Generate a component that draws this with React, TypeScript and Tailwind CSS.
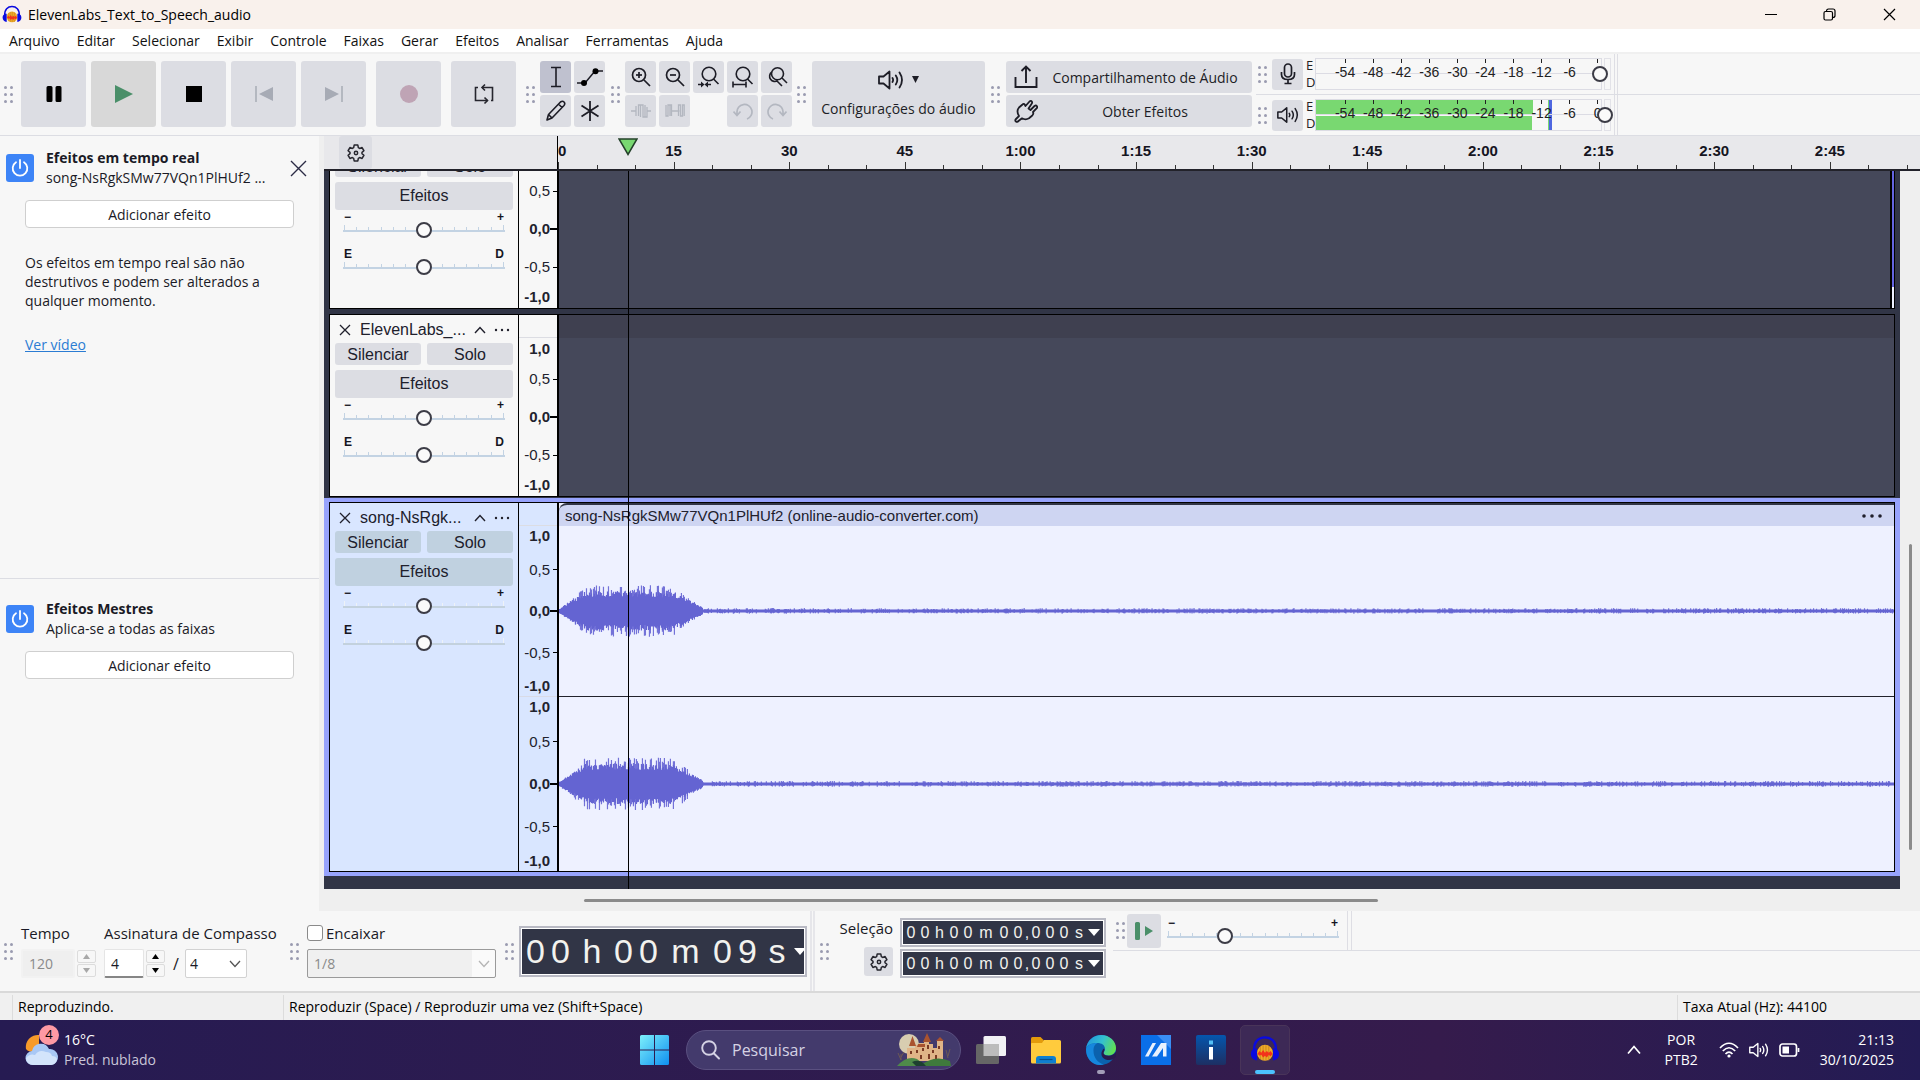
import type { ReactNode } from "react";

const BTN = "flex items-center justify-center rounded-[3px] bg-[#dcdde3]";
const UI = "font-['Open_Sans','Noto_Sans',sans-serif]";
const ARIAL = "font-['Liberation_Sans',Arial,sans-serif]";

/* ---------- small shared pieces ---------- */

function Grip({ className = "" }: { className?: string }) {
  return (
    <span className={`grid w-[9px] shrink-0 grid-cols-2 gap-x-[3px] gap-y-1 self-center ${className}`} aria-hidden="true">
      {[0, 1, 2, 3, 4, 5].map((i) => (
        <i key={i} className="size-[3px] rounded-full bg-[#9a9bb0]" />
      ))}
    </span>
  );
}

function Svg({ w, h, vb, children, sw = 2, className = "" }: { w: number; h: number; vb?: string; children: ReactNode; sw?: number; className?: string }) {
  return (
    <svg width={w} height={h} viewBox={vb ?? `0 0 ${w} ${h}`} fill="none" stroke="currentColor" strokeWidth={sw} className={`shrink-0 ${className}`} aria-hidden="true">
      {children}
    </svg>
  );
}

function Gear() {
  return (
    <Svg w={20} h={20} vb="0 0 24 24" sw={1.8}>
      <circle cx="12" cy="12" r="2" />
      <path strokeLinejoin="round" d="M9.8 2.5h4.4l.6 3 1.6 1 2.9-1 2.2 3.8-2.3 1.9v1.6l2.3 1.9-2.2 3.8-2.9-1-1.6 1-.6 3H9.8l-.6-3-1.6-1-2.9 1-2.2-3.8 2.3-1.9v-1.6L2.5 9.3l2.2-3.8 2.9 1 1.6-1z" />
    </Svg>
  );
}

function Speaker({ w = 26 }: { w?: number }) {
  return (
    <Svg w={w} h={20} vb="0 0 26 20" sw={1.8}>
      <path strokeLinejoin="round" d="M1 6.5h4.5l6-5v17l-6-5H1z" />
      <path strokeLinecap="round" d="M14.5 8q1.2 2 0 4M17.8 5.5q3 4.500 0 9M21.500 2.500q5 7.500 0 15" />
    </Svg>
  );
}

function HeadphoneLogo({ size }: { size: number }) {
  return (
    <svg width={size} height={size} viewBox="0 0 32 32" aria-hidden="true" className="shrink-0">
      <circle cx="16" cy="19" r="8.500" fill="#f0ab28" />
      <path d="M11 13v13M14 11v16M17 11v16M20 12v15" stroke="#c98a20" strokeWidth="1" />
      <path d="M8 20l2-3 2 2 2-3 2 3 2-2 2 2 2-2 2 3-2 3-2-2-2 3-2-2-2 2-2-3-2 1z" fill="#f3321b" />
      <path d="M4.500 17C3.500 7 9.500 2.500 16 2.500S28.500 7 27.500 17" fill="none" stroke="#0a0ae0" strokeWidth="2.400" />
      <path d="M7.500 14c-5 0-6.500 3-6.500 6.500S3.500 27 7.500 27zM24.500 14c5 0 6.500 3 6.500 6.500S28.500 27 24.500 27z" fill="#0a0ae0" />
    </svg>
  );
}

type RangeProps = { label: string; left: string; right: string; value: number; steps: number; tone: string; tickTone: string };

function TickSlider({ label, left, right, value, steps, tone, tickTone }: RangeProps) {
  return (
    <div className={`${ARIAL} text-[12px] leading-3 text-[#15151f]`}>
      <div className="flex justify-between px-px font-bold">
        <span>{left}</span>
        <span>{right}</span>
      </div>
      <div className="relative -mt-px h-4">
        <div className="absolute inset-x-0 top-[3px] flex items-end justify-between px-px">
          {Array.from({ length: steps + 1 }, (_, i) => (
            <i key={i} className={`w-px ${tickTone} ${i === 0 || i === steps ? "h-[5px]" : "h-[3px]"}`} />
          ))}
        </div>
        <div className={`absolute inset-x-0 top-2 h-[2px] ${tone}`} />
        <input
          type="range"
          aria-label={label}
          defaultValue={value}
          className="absolute inset-0 h-4 w-full appearance-none bg-transparent [&::-webkit-slider-thumb]:size-4 [&::-webkit-slider-thumb]:appearance-none [&::-webkit-slider-thumb]:rounded-full [&::-webkit-slider-thumb]:border-2 [&::-webkit-slider-thumb]:border-[#3c3c46] [&::-webkit-slider-thumb]:bg-[#fafafa]"
        />
      </div>
    </div>
  );
}

/* ---------- title bar and menu ---------- */

function TitleBar() {
  return (
    <header className={`flex h-[29px] shrink-0 items-center bg-[#f9f1ec] pl-0.5 text-[14px] text-black ${UI}`}>
      <HeadphoneLogo size={20} />
      <h1 className="ml-1.5 flex-1">ElevenLabs_Text_to_Speech_audio</h1>
      <div className="flex items-center">
        <button aria-label="Minimizar" className="flex w-[58px] justify-center">
          <Svg w={12} h={12} sw={1}><path d="M0 5.500h12" /></Svg>
        </button>
        <button aria-label="Restaurar" className="flex w-[58px] justify-center">
          <Svg w={13} h={13} sw={1.2}>
            <rect x="1" y="3.500" width="8.500" height="8.500" rx="1.500" />
            <path d="M3.500 3.200Q3.500 1 5.500 1H10q2 0 2 2v4.500q0 2-2.200 2" />
          </Svg>
        </button>
        <button aria-label="Fechar" className="flex w-[62px] justify-center">
          <Svg w={13} h={13} sw={1.2}><path d="M1 1l11 11M12 1L1 12" /></Svg>
        </button>
      </div>
    </header>
  );
}

const MENUS = ["Arquivo", "Editar", "Selecionar", "Exibir", "Controle", "Faixas", "Gerar", "Efeitos", "Analisar", "Ferramentas", "Ajuda"];

function MenuBar() {
  return (
    <nav className={`flex h-[25px] shrink-0 items-center gap-[17px] border-b-2 border-[#f0f0f0] bg-white pl-[9px] text-[14px] text-[#111] ${UI}`}>
      {MENUS.map((m) => (
        <button key={m}>{m}</button>
      ))}
    </nav>
  );
}

/* ---------- top toolbars ---------- */

function Transport() {
  const big = `${BTN} h-[66px] w-[65px]`;
  return (
    <>
      <div className="ml-2 flex gap-[5px]">
        <button aria-label="Pausar" className={`${big} text-black`}>
          <Svg w={16} h={16} sw={0}><path fill="currentColor" d="M2 0h3q1.500 0 1.500 1.500v13Q6.500 16 5 16H2Q.5 16 .5 14.500v-13Q.5 0 2 0zM11 0h3q1.500 0 1.500 1.500v13q0 1.500-1.500 1.500h-3q-1.500 0-1.500-1.500v-13Q9.500 0 11 0z" /></Svg>
        </button>
        <button aria-label="Reproduzir" className="flex h-[66px] w-[65px] items-center justify-center rounded-[3px] bg-[#d8d8d8] text-[#4a8f69]">
          <Svg w={18} h={18} sw={0}><path fill="currentColor" d="M0 0l18 9-18 9z" /></Svg>
        </button>
        <button aria-label="Parar" className={`${big} text-black`}>
          <Svg w={16} h={16} sw={0}><path fill="currentColor" d="M0 0h16v16H0z" /></Svg>
        </button>
        <button aria-label="Ir para o início" className={`${big} text-[#a7abb5]`}>
          <Svg w={18} h={16} sw={1.500}><path d="M1 0v16" /><path stroke="none" fill="currentColor" d="M18 1v14L4 8z" /></Svg>
        </button>
        <button aria-label="Ir para o fim" className={`${big} text-[#a7abb5]`}>
          <Svg w={18} h={16} sw={1.500}><path d="M17 0v16" /><path stroke="none" fill="currentColor" d="M0 1v14l14-7z" /></Svg>
        </button>
      </div>
      <button aria-label="Gravar" className={`${big} ml-2.5`}>
        <i className="size-[18px] rounded-full bg-[#bfa4b5]" />
      </button>
      <button aria-label="Repetir" className={`${big} ml-2.5 text-[#26262e]`}>
        <Svg w={20} h={22} sw={1.600}>
          <path d="M5 17.500H1.500V4.500H4M8 4.500h10.500v13H17M1.500 17.500h12" />
          <path d="M11 1.500l-3 3 3 3M10.500 14.500l3 3-3 3" />
        </Svg>
      </button>
    </>
  );
}

const magnifier = (minus: boolean, plus: boolean) => (
  <Svg w={20} h={20} sw={1.700}>
    <circle cx="8" cy="8" r="6.500" />
    <path d="M13 13l6 6" />
    {(minus || plus) && <path d="M5 8h6" />}
    {plus && <path d="M8 5v6" />}
  </Svg>
);

function ToolGrid() {
  const sm = `${BTN} h-8 w-[31px] text-[#1d1d26]`;
  const off = `${BTN} h-8 w-[31px] text-[#b3b7c0]`;
  return (
    <>
      <div className="ml-[5px] grid grid-cols-[31px_31px] gap-x-[3px] gap-y-0.5">
        <button aria-label="Seleção" className="flex h-8 w-[31px] items-center justify-center rounded-[3px] bg-[#bfc1cf] text-[#1d1d26]">
          <Svg w={12} h={22} sw={1.600}><path d="M1 1.500h10M6 1.500v19M1 20.500h10" /></Svg>
        </button>
        <button aria-label="Envelope" className={sm}>
          <Svg w={26} h={18} sw={1.500}>
            <path d="M0 15h8L18 3h8" />
            <circle cx="7" cy="15" r="3" fill="#000" stroke="none" />
            <circle cx="18.500" cy="3.200" r="3" fill="#000" stroke="none" />
          </Svg>
        </button>
        <button aria-label="Desenho" className={sm}>
          <Svg w={22} h={22} sw={1.600}>
            <path strokeLinejoin="round" d="M2 20l1.500-5.500L15.500 2q2-1.500 3.500 0t0 3.500L7 18zM3.500 14.500L7 18M13.500 4l3.500 3.500" />
          </Svg>
        </button>
        <button aria-label="Multiferramenta" className={sm}>
          <Svg w={20} h={20} sw={1.800}><path d="M10 0v20M1.500 4.500l17 11M18.500 4.500l-17 11" /></Svg>
        </button>
      </div>
      <Grip className="ml-1.5" />
      <div className="ml-[5px] grid grid-cols-[31px_31px_31px_31px_31px] gap-x-[3px] gap-y-0.5">
        <button aria-label="Ampliar" className={sm}>{magnifier(true, true)}</button>
        <button aria-label="Reduzir" className={sm}>{magnifier(true, false)}</button>
        <button aria-label="Ajustar seleção à largura" className={sm}>
          <Svg w={22} h={22} sw={1.600}>
            <circle cx="11" cy="8" r="6.800" />
            <path d="M15.500 13l5 5M0 18.500h5M8 18.500h5" />
            <path stroke="none" fill="currentColor" d="M3 15.500l3.500 3-3.500 3zM10 15.500l-3.500 3 3.500 3z" />
          </Svg>
        </button>
        <button aria-label="Ajustar projeto à largura" className={sm}>
          <Svg w={22} h={22} sw={1.600}>
            <circle cx="11" cy="8" r="6.800" />
            <path d="M15.500 13l5 5M1 18.500h13M1 15.500v6M14 15.500v6" />
          </Svg>
        </button>
        <button aria-label="Alternar zoom" className={sm}>
          <Svg w={22} h={20} sw={1.600}>
            <circle cx="11.500" cy="6.800" r="6" />
            <path d="M5.800 5a5 5 0 1 0 6 8.500M16 11l5 5M11 14l5 5" />
          </Svg>
        </button>
        <button aria-label="Aparar áudio" className={off}>
          <Svg w={20} h={16} sw={1.300}><path d="M0 8h5M5 3v10M7.500 13V2h2v12M9.500 14V2h2.500v12h2V2M14 14h2V4M16 8h4" /></Svg>
        </button>
        <button aria-label="Silenciar áudio" className={off}>
          <Svg w={20} h={16} sw={1.300}><path d="M1 2v11h2V2h2v11M5 2h1.500v11M6.500 8h8M13.500 13V2h2v11h2V2h1.700v11" /></Svg>
        </button>
        <span />
        <button aria-label="Desfazer" className={off}>
          <Svg w={20} h={20} sw={1.700}><path d="M14 18a7.500 7.500 0 1 0-10-6.500V14M.5 10.500l3.500 4 3.500-4" /></Svg>
        </button>
        <button aria-label="Refazer" className={off}>
          <Svg w={20} h={20} sw={1.700}><path d="M6 18a7.500 7.500 0 1 1 10-6.500V14M12.500 10.500l3.500 4 3.500-4" /></Svg>
        </button>
      </div>
    </>
  );
}

const DB = [-54, -48, -42, -36, -30, -24, -18, -12, -6, 0];

function Meter({ name, active, children }: { name: string; active: boolean; children: ReactNode }) {
  return (
    <div className="flex h-10 items-center pl-0.5">
      <Grip />
      <button aria-label={name} className={`${BTN} ml-[5px] h-[31px] w-[31px] text-[#1d1d26]`}>{children}</button>
      <div className={`ml-[3px] flex w-[9px] flex-col text-[13px] leading-[17px] text-[#222] ${UI}`}>
        <span>E</span>
        <span>D</span>
      </div>
      <div className="relative h-8 w-[287px] border border-[#dcdce4] bg-[#f7f7f7]" role="meter" aria-label={`Nível de ${name}`}>
        {active && (
          <>
            <div className="h-[14px] w-[217px] bg-[#79d871]" />
            <div className="mt-0.5 h-[14px] w-[216px] bg-[#79d871]" />
            <div className="absolute inset-y-0 left-[232px] w-1 border-l border-[#79d871] bg-[#4f67e0]" />
          </>
        )}
        <div className="absolute inset-x-0 top-[14px] h-px bg-[#dcdce4]" />
        {DB.map((d, i) => (
          <div key={d} className={`absolute top-0 flex w-8 -translate-x-1/2 flex-col items-center text-[14px] leading-[19px] text-[#222] ${ARIAL}`} style={{ left: `${10.2 + i * 9.85}%` }}>
            <i className="h-1 w-px bg-[#222]" />
            {(d !== 0 || active) && <span>{d}</span>}
          </div>
        ))}
        <div className={`absolute top-[7px] size-4 rounded-full border-2 border-[#3c3c46] bg-[#fafafa] ${active ? "left-[281px]" : "left-[276px]"}`} />
      </div>
      <div className="ml-0.5 h-8 w-[7px] border border-[#e2e2e8]" />
      <div className="ml-[3px] h-10 w-1 border-x border-[#dedee4]" />
    </div>
  );
}

function TopToolbars() {
  return (
    <div className={`flex h-[82px] shrink-0 items-center border-b border-[#dcdde3] bg-[#f7f7f7] pb-px pl-1 ${UI}`}>
      <Grip />
      <Transport />
      <Grip className="ml-2.5" />
      <ToolGrid />
      <Grip className="ml-[5px]" />
      <button className={`${BTN} ml-1.5 h-[66px] w-[173px] flex-col gap-2 text-[14px] text-[#1d1d26]`}>
        <span className="flex items-center gap-2">
          <Speaker />
          <Svg w={7} h={7} sw={0}><path fill="currentColor" d="M0 0h7L3.500 7z" /></Svg>
        </span>
        Configurações do áudio
      </button>
      <Grip className="ml-1.5" />
      <div className="ml-1.5 flex w-[246px] flex-col gap-0.5 text-[14px] text-[#1d1d26]">
        <button className="flex h-8 items-center rounded-[3px] bg-[#dcdde3] pl-2">
          <Svg w={24} h={24} sw={1.900}>
            <path d="M1.500 12v10h21V12M12 18V2M7.500 6L12 1.500 16.500 6" />
          </Svg>
          <span className="flex-1 text-center">Compartilhamento de Áudio</span>
        </button>
        <button className="flex h-8 items-center rounded-[3px] bg-[#dcdde3] pl-2">
          <Svg w={24} h={24} sw={1.800}>
            <path strokeLinejoin="round" d="M2 22.500q-1.500-1 0-2.500l3-3q-3-5 0-8.500l3.500-3q1.500-1.500 2.500.5l.5 1 4-4.500q1.500-1.200 2.300 0t-.3 2.500L14.500 9.500l2 1.500L20.500 7q1.500-1 2.300 0t0 2.200L19 13q1 2-1 3.800l-3 2.500q-3.500 2-7 0L4.500 22q-1.500 1.500-2.500.5z" />
          </Svg>
          <span className="flex-1 text-center">Obter Efeitos</span>
        </button>
      </div>
      <div className="ml-1 flex-1 self-stretch">
        <Meter name="Gravação" active={false}>
          <Svg w={16} h={22} sw={1.700}>
            <rect x="4.500" y="1" width="7" height="13" rx="3.500" />
            <path d="M1.500 9v2.500q0 5 6.500 5t6.500-5V9M8 16.500V20M4.500 20.500h7" />
          </Svg>
        </Meter>
        <div className="h-px bg-[#dcdde3]" />
        <Meter name="Reprodução" active>
          <Speaker w={22} />
        </Meter>
      </div>
    </div>
  );
}

/* ---------- effects panel ---------- */

function Power() {
  return (
    <button aria-label="Ativar efeitos" className="flex size-7 shrink-0 items-center justify-center rounded-[3px] bg-[#3d84f7] text-white">
      <Svg w={18} h={18} sw={1.800}>
        <path strokeLinecap="round" d="M5 3.200a7.300 7.300 0 1 0 8 0M9 1v8" />
      </Svg>
    </button>
  );
}

function AddEffect() {
  return <button className="ml-[25px] flex h-7 w-[269px] items-center justify-center rounded-[4px] border border-[#cfcfcf] bg-white">Adicionar efeito</button>;
}

function EffectsPanel() {
  return (
    <aside className={`flex w-[319px] shrink-0 flex-col bg-[#f7f7f7] text-[14px] leading-[19px] text-[#1a1a26] ${UI}`}>
      <section className="h-[442px] pt-3">
        <div className="mb-3 flex items-center pr-3 pl-1.5">
          <Power />
          <div className="ml-3 w-[240px] leading-5">
            <h2 className="font-bold">Efeitos em tempo real</h2>
            <p>song-NsRgkSMw77VQn1PlHUf2 ...</p>
          </div>
          <button aria-label="Fechar painel" className="ml-1 text-[#2b2b45]">
            <Svg w={17} h={17} sw={1.400}><path d="M1 1l15 15M16 1L1 16" /></Svg>
          </button>
        </div>
        <AddEffect />
        <p className="mt-[25px] w-[260px] pl-[25px]">
          Os efeitos em tempo real são não destrutivos e podem ser alterados a qualquer momento.
        </p>
        <a href="#video" className="mt-[25px] ml-[25px] inline-block text-[#2b7cd3] underline">Ver vídeo</a>
      </section>
      <section className="flex-1 border-t border-[#dcdde3] pt-5">
        <div className="mb-3 flex items-center pl-1.5">
          <Power />
          <div className="ml-3 leading-5">
            <h2 className="font-bold">Efeitos Mestres</h2>
            <p>Aplica-se a todas as faixas</p>
          </div>
        </div>
        <AddEffect />
      </section>
    </aside>
  );
}

/* ---------- timeline and tracks ---------- */

const SPAN = 176.700;
const MARKS = ["0", "15", "30", "45", "1:00", "1:15", "1:30", "1:45", "2:00", "2:15", "2:30", "2:45"];

function Timeline() {
  return (
    <div className="flex h-[35px] shrink-0 border-b-2 border-[#22222a] bg-[#e8e8eb]">
      <div className="w-[233px] shrink-0 pl-[15px]">
        <button aria-label="Opções da linha do tempo" className={`${BTN} h-[33px] w-[33px] text-[#26262e]`}>
          <Gear />
        </button>
      </div>
      <div className={`relative flex-1 border-l border-black text-[15px] leading-5 font-bold text-[#15151f] ${ARIAL}`}>
        {Array.from({ length: 36 }, (_, i) => (
          <i key={i} className={`absolute bottom-0 w-px bg-[#333] ${i % 3 === 0 ? "h-[7px]" : "h-1"}`} style={{ left: `${((i * 5) / SPAN) * 100}%` }} />
        ))}
        {MARKS.map((m, i) => (
          <span key={m} className={`absolute top-[5px] ${i === 0 ? "" : "-translate-x-1/2"}`} style={{ left: `${((i * 15) / SPAN) * 100}%` }}>
            {m}
          </span>
        ))}
        <svg width="20" height="18" viewBox="0 0 20 18" className="absolute top-[2px] left-[60px]" aria-hidden="true">
          <path d="M1 1h18L10 16.500z" fill="#79d871" stroke="#24402a" strokeWidth="1.500" />
        </svg>
      </div>
    </div>
  );
}

function wavePath(seed: number, width: number, idle: number) {
  let s = seed;
  const rnd = () => {
    s = (s * 16807) % 2147483647;
    return s / 2147483647;
  };
  let core = "";
  let peaks = "";
  for (let x = 0; x < width; x += 1) {
    let env = 0;
    if (x < 144) env = Math.min(1, (x + 2) / 28) * Math.min(1, (148 - x) / 34);
    const up = env > 0 ? env * (13 + rnd() * 6) + 1 : idle;
    const down = env > 0 ? env * (13 + rnd() * 6) + 1 : idle;
    core += `M${x + 0.5} ${(-up).toFixed(1)}V${down.toFixed(1)}`;
    if (env > 0 && rnd() > 0.5) peaks += `M${x + 0.5} ${(-env * (17 + rnd() * 9)).toFixed(1)}V${(env * (17 + rnd() * 9)).toFixed(1)}`;
    if (env === 0 && rnd() > 0.6) peaks += `M${x + 0.5} ${(-idle - rnd() * 1.500).toFixed(1)}V${(idle + rnd() * 1.200).toFixed(1)}`;
  }
  return { core, peaks };
}

const WAVES = [wavePath(7321, 1336, 1.500), wavePath(90217, 1336, 1.500)];

function Wave({ index }: { index: number }) {
  return (
    <svg viewBox="0 -86 1336 172" preserveAspectRatio="none" className="h-full w-full" aria-hidden="true">
      <path d={WAVES[index].peaks} stroke="#7372d8" strokeWidth="1.200" />
      <path d={WAVES[index].core} stroke="#6464d2" strokeWidth="1.200" />
    </svg>
  );
}

const SCALE_LABELS = ["1,0", "0,5", "0,0", "-0,5", "-1,0"];
const SCALE_ALIGN = ["items-start", "items-center", "items-center", "items-center", "items-end"];

function Scale({ size }: { size: string }) {
  return (
    <div className={`grid grid-rows-[1fr_2fr_2fr_2fr_1fr] ${size} text-[15px] leading-4 text-[#22222e] ${ARIAL}`}>
      {SCALE_LABELS.map((l, i) => (
        <div key={l} className={`flex min-h-0 justify-end gap-[3px] ${SCALE_ALIGN[i]}`}>
          <span className={i % 2 === 0 ? "font-bold" : ""}>{l}</span>
          <i className={`bg-black ${i % 2 === 1 ? "h-px w-1" : i === 2 ? "-ml-[3px] h-[2px] w-[7px]" : "h-px w-1 opacity-0"}`} />
        </div>
      ))}
    </div>
  );
}

type TrackProps = { name: string; selected?: boolean; scales: string[]; children: ReactNode };

function Track({ name, selected = false, scales, children }: TrackProps) {
  const panel = selected ? "bg-[#d9e6ff]" : "bg-[#f7f7f7]";
  const btn = selected ? "bg-[#c0d1e0]" : "bg-[#dcdde3]";
  const tone = selected ? "bg-[#c3d1dd]" : "bg-[#c3d3e3]";
  const tickTone = selected ? "bg-[#eef2f6]" : "bg-[#c3d3e3]";
  return (
    <article className={`flex border border-black ${selected ? "h-[370px]" : "h-[183px]"}`}>
      <div className={`w-[189px] shrink-0 border-r border-black px-[5px] pt-1 text-[16px] text-[#20202c] ${panel} ${ARIAL}`}>
        <div className="flex h-[22px] items-center pr-0.5 pl-1">
          <button aria-label="Fechar faixa"><Svg w={12} h={12} sw={1.300}><path d="M1 1l10 10M11 1L1 11" /></Svg></button>
          <button className="ml-[9px] w-[110px] text-left">{name}</button>
          <button aria-label="Recolher" className="ml-1"><Svg w={12} h={8} sw={1.400}><path d="M1 7l5-5.500L11 7" /></Svg></button>
          <button aria-label="Menu da faixa" className="ml-2"><Svg w={16} h={4} sw={0}><g fill="currentColor"><circle cx="2" cy="2" r="1.200" /><circle cx="8" cy="2" r="1.200" /><circle cx="14" cy="2" r="1.200" /></g></Svg></button>
        </div>
        <div className="mt-0.5 grid grid-cols-2 gap-1.5">
          <button className={`h-[22px] rounded-[3px] leading-6 ${btn}`}>Silenciar</button>
          <button className={`h-[22px] rounded-[3px] leading-6 ${btn}`}>Solo</button>
        </div>
        <button className={`mt-[5px] h-7 w-full rounded-[3px] leading-7 ${btn}`}>Efeitos</button>
        <div className="mt-px flex flex-col gap-2.5 px-2">
          <TickSlider label="Volume" left="−" right="+" value={50} steps={13} tone={tone} tickTone={tickTone} />
          <TickSlider label="Panorama" left="E" right="D" value={50} steps={13} tone={tone} tickTone={tickTone} />
        </div>
      </div>
      <div className={`w-[38px] shrink-0 ${panel}`}>
        <div className="h-[23px] border-b border-[#dcdde3]" />
        {scales.map((s, i) => (
          <div key={i} className={i > 0 ? "border-t border-[#d9dbe6]" : ""}>
            <Scale size={s} />
          </div>
        ))}
      </div>
      <div className={`flex min-w-0 flex-1 flex-col border-l-2 border-black ${selected ? "bg-[#eef1ff]" : "bg-[#45485a]"}`}>{children}</div>
    </article>
  );
}

const SHORT = ["h-[158px] pt-[3px] pb-[3px]"];

function Tracks() {
  return (
    <main className="flex min-w-0 flex-1 flex-col bg-[#efefef]">
      <Timeline />
      <div className="flex min-h-0 flex-1">
        <div className="relative min-w-0 flex-1 overflow-hidden bg-[#313546]">
          <div className="-mt-[45px] flex flex-col gap-[5px] pr-[5px] pl-[5px]">
            <Track name="ElevenLabs_..." scales={SHORT}>
              <div className="ml-auto flex h-full w-1 border-l-2 border-black bg-[#eef1ff]">
                <div className="h-[160px] w-0.5 bg-[#6464e0]" />
              </div>
            </Track>
            <Track name="ElevenLabs_..." scales={SHORT}>
              <div className="h-[23px] bg-[#3f4050]" />
            </Track>
          </div>
          <div className="mt-px bg-[#97a3fc] py-1 pr-[5px] pl-[5px]">
            <Track name="song-NsRgk..." selected scales={["h-[170px] pt-[2px] pb-[2px]", "h-[174px] pt-[2px] pb-[2px]"]}>
              <div className={`flex h-[23px] shrink-0 items-center justify-between rounded-tl-lg border-t-2 border-[#313546] bg-[#ced5f2] pr-3 pl-[6px] text-[15px] leading-5 text-[#20202c] ${ARIAL}`}>
                <span>song-NsRgkSMw77VQn1PlHUf2 (online-audio-converter.com)</span>
                <button aria-label="Menu do clipe"><Svg w={20} h={4} sw={0}><g fill="currentColor"><circle cx="2" cy="2" r="1.800" /><circle cx="10" cy="2" r="1.800" /><circle cx="18" cy="2" r="1.800" /></g></Svg></button>
              </div>
              <div className="h-[171px] shrink-0 border-b border-[#22222c]"><Wave index={0} /></div>
              <div className="h-[174px] shrink-0"><Wave index={1} /></div>
            </Track>
          </div>
          <div className="absolute inset-y-0 left-[304px] w-px bg-black" />
        </div>
        <div className="flex w-5 justify-center pt-[373px]">
          <div className="h-[306px] w-[3px] rounded-full bg-[#8b8b8b]" />
        </div>
      </div>
      <div className="flex h-[22px] shrink-0 items-center pr-[542px] pl-[260px]">
        <div className="h-[3px] flex-1 rounded-full bg-[#8b8b8b]" />
      </div>
    </main>
  );
}

/* ---------- bottom toolbars ---------- */

function Spinner({ off = false }: { off?: boolean }) {
  const cell = `flex h-[13px] w-[19px] items-center justify-center rounded-[2px] border border-[#dcdcdc] ${off ? "text-[#a8a8a8]" : "text-black"}`;
  return (
    <span className="ml-0.5 flex flex-col gap-px">
      <button aria-label="Aumentar" className={cell}><Svg w={7} h={5} sw={0}><path fill="currentColor" d="M0 5h7L3.500 0z" /></Svg></button>
      <button aria-label="Diminuir" className={cell}><Svg w={7} h={5} sw={0}><path fill="currentColor" d="M0 0h7L3.500 5z" /></Svg></button>
    </span>
  );
}

function Chevron({ className }: { className: string }) {
  return <Svg w={12} h={8} sw={1.300} className={`pointer-events-none absolute top-1/2 -translate-y-1/2 ${className}`}><path d="M1 1l5 5.500L11 1" /></Svg>;
}

type Cell = [string, string];
const D25 = "w-[25px]";
const D14 = "w-[14px]";
const BIG: Cell[] = [["0", D25], ["0", D25], ["h", "w-[38px]"], ["0", D25], ["0", D25], ["m", "w-[49px]"], ["0", D25], ["9", D25], ["s", "w-[34px]"]];
const SMALL: Cell[] = [["0", D14], ["0", D14], ["h", "w-[15px]"], ["0", D14], ["0", D14], ["m", "w-[22px]"], ["0", D14], ["0", D14], [",", "w-[4px]"], ["0", D14], ["0", D14], ["0", D14], ["s", "w-4"]];

function TimeField({ cells, className, arrow, label }: { cells: Cell[]; className: string; arrow: string; label: string }) {
  return (
    <div className={`flex items-center border-2 border-[#b9bac4] bg-[#313546] text-[#f2f2ee] ring-1 ring-white ring-inset ${ARIAL} ${className}`} role="group" aria-label={label}>
      {cells.map(([c, w], i) => (
        <span key={i} className={`flex shrink-0 justify-center ${w}`}>{c}</span>
      ))}
      <button aria-label={`Formato de ${label}`} className={arrow}>
        <Svg w={12} h={7} sw={0}><path fill="#fff" d="M0 0h12L6 7z" /></Svg>
      </button>
    </div>
  );
}

function BottomToolbars() {
  return (
    <div className={`flex h-20 shrink-0 bg-[#f7f7f7] pl-1 text-[14px] text-[#1a1a26] ${UI}`}>
      <Grip />
      <div className="ml-2 w-[75px] pt-[11px]">
        <label htmlFor="tempo" className="block text-[15px] leading-[22px]">Tempo</label>
        <div className="mt-[5px] flex items-center">
          <input id="tempo" disabled defaultValue="120" className="h-[29px] w-[54px] rounded-[2px] border-2 border-[#f2f2f2] bg-[#efefef] pl-1.5 text-[#8a8a8a]" />
          <Spinner off />
        </div>
      </div>
      <div className="ml-2 w-[178px] pt-[11px]">
        <label htmlFor="beats" className="block text-[15px] leading-[22px] whitespace-nowrap">Assinatura de Compasso</label>
        <div className="mt-[5px] flex items-center">
          <input id="beats" defaultValue="4" className="h-[29px] w-10 rounded-[2px] border border-b-2 border-[#e5e5e5] border-b-[#868686] bg-white pl-1.5" />
          <Spinner />
          <span className="ml-2 text-[16px]">/</span>
          <span className="relative ml-1.5">
            <select aria-label="Unidade de tempo" className="h-[29px] w-[62px] appearance-none rounded-[2px] border border-[#d2d2d2] bg-white pl-1">
              <option>4</option>
            </select>
            <Chevron className="right-1.5 text-[#555]" />
          </span>
        </div>
      </div>
      <Grip className="ml-2" />
      <div className="ml-2 w-[189px] pt-[11px]">
        <label className="flex h-[22px] items-center gap-[3px] text-[15px]">
          <input type="checkbox" className="size-4 appearance-none rounded-[3px] border border-[#8a8a8a] bg-white" />
          Encaixar
        </label>
        <div className="relative mt-[5px]">
          <select disabled aria-label="Encaixar em" className="h-[29px] w-full appearance-none rounded-[2px] border border-[#9a9a9a] bg-[#f0f0f0] pl-1.5 text-[#8a8a8a] opacity-100 shadow-[inset_-23px_0_0_#fafafa]">
            <option>1/8</option>
          </select>
          <Chevron className="right-1.5 text-[#b5b5b5]" />
        </div>
      </div>
      <Grip className="ml-[9px]" />
      <TimeField label="Tempo" cells={BIG} className="ml-[5px] h-[51px] w-[288px] self-center pl-0.5 text-[34px]" arrow="w-[11px] overflow-hidden" />
      <div className="ml-[3px] w-[5px] border-x-2 border-[#e6e6ea]" />
      <Grip className="ml-[5px]" />
      <div className="ml-2 flex w-[56px] flex-col items-end pt-1.5">
        <span className="text-[15px] leading-[22px]">Seleção</span>
        <button aria-label="Opções da seleção" className={`${BTN} mt-2 h-[29px] w-[29px] text-[#26262e]`}><Gear /></button>
      </div>
      <div className="ml-[7px] flex flex-col gap-0.5 pt-[7px] text-[16px]">
        <TimeField label="Início da seleção" cells={SMALL} className="h-[29px] w-[206px] pl-0.5" arrow="ml-auto pr-1" />
        <TimeField label="Fim da seleção" cells={SMALL} className="h-[29px] w-[206px] pl-0.5" arrow="ml-auto pr-1" />
      </div>
      <div className="ml-[7px] flex-1">
        <div className="flex h-10 items-center border-b border-[#dcdde3] pl-[3px]">
          <Grip />
          <button aria-label="Reproduzir na velocidade" className={`${BTN} ml-0.5 h-[34px] w-[34px]`}>
            <Svg w={18} h={18} sw={0}>
              <path fill="#4a8f69" d="M1.500 0h2Q5 0 5 1.500v15Q5 18 3.500 18h-2Q0 18 0 16.500v-15Q0 0 1.500 0zM10 4l8 5-8 5z" />
            </Svg>
          </button>
          <div className="ml-1.5 w-[172px]">
            <TickSlider label="Velocidade de reprodução" left="−" right="+" value={32} steps={14} tone="bg-[#c3d3e3]" tickTone="bg-[#c3d3e3]" />
          </div>
          <div className="ml-2 w-[5px] self-stretch border-x border-[#dedee4]" />
        </div>
      </div>
    </div>
  );
}

function StatusBar() {
  return (
    <footer className={`flex h-[29px] shrink-0 border-t-2 border-[#d9d9d9] bg-[#f0f0f0] pt-0.5 pl-3 text-[14px] leading-6 text-black ${UI}`}>
      <div className="w-[271px] border-l border-[#dcdcdc] pl-[5px]">Reproduzindo.</div>
      <div className="flex-1 border-l border-[#dcdcdc] pl-[5px]">Reproduzir (Space) / Reproduzir uma vez (Shift+Space)</div>
      <div className="w-[243px] border-l border-[#dcdcdc] pl-[5px]">Taxa Atual (Hz): 44100</div>
    </footer>
  );
}

/* ---------- taskbar ---------- */

function Weather() {
  return (
    <svg width="34" height="38" viewBox="0 0 34 38" aria-hidden="true" className="absolute top-0 left-0">
      <path d="M14 6a12 12 0 0 0-13 14c3 4 10 4 13-2z" fill="#f79a2a" />
      <path d="M8 36a7 7 0 0 1-1-14 9 9 0 0 1 17-2 7.500 7.500 0 0 1 2 16z" fill="#a9c8f5" />
      <path d="M8 36a7 7 0 0 1-7-7q4-5 9-3 4-6 11-3 5 0 6 4 4 0 5 3a6 6 0 0 1-6 6z" fill="#d3e4fb" />
    </svg>
  );
}

function Castle() {
  return (
    <svg width="56" height="34" viewBox="0 0 56 34" aria-hidden="true">
      <circle cx="13" cy="11" r="10" fill="#d8cdb0" />
      <path d="M11 15h8v-3h4v-2h5V8h5v3h4v4h4V8h6v20H11z" fill="#e0b487" />
      <path d="M13 13l3.500-10L20 13zM27 9l4-9 4 9zM40 8l4-4 4 4zM21 14h8v-3h-7z" fill="#a9532f" />
      <path d="M14 18h2v3h-2zM20 17h2v3h-2zM26 15h2v3h-2zM31 12h2v4h-2zM36 17h2v3h-2zM42 13h2v3h-2zM24 22h2v4h-2zM32 21h2v5h-2zM39 22h2v4h-2z" fill="#7a3a24" />
      <path d="M1 33q10-11 20-7l9 7z" fill="#4f8a4a" />
      <path d="M24 33q14-12 30-5l1 5z" fill="#3f7a3c" />
      <path d="M16 29q8-4 14 4H20z" fill="#1d4030" />
      <path d="M2 20l3 7M5 21v6M8 19l-3 5M50 17l2 8M54 16l-2 7" stroke="#76604e" strokeWidth=".8" />
    </svg>
  );
}

function Taskbar() {
  return (
    <div className={`flex h-[60px] shrink-0 items-center bg-linear-to-r from-[#261b52] via-[#351b4c] via-75% to-[#231b54] text-[14px] text-white ${UI}`}>
      <button className="flex w-[640px] items-center pl-[25px] text-left">
        <span className="relative h-[42px] w-[34px]">
          <Weather />
          <span className="absolute -top-1 left-3.5 flex size-5 items-center justify-center rounded-full bg-[#fe99a4] text-[13px] text-black">4</span>
        </span>
        <span className="ml-[5px] leading-5">
          16°C
          <span className="block text-[#c9c5d8]">Pred. nublado</span>
        </span>
      </button>
      <button aria-label="Iniciar" className="w-7">
        <svg width="29" height="30" viewBox="0 0 29 30" aria-hidden="true">
          <defs><linearGradient id="win" x1="0" y1="0" x2="1" y2="1"><stop offset="0" stopColor="#7df0fb" /><stop offset="1" stopColor="#0f8ff0" /></linearGradient></defs>
          <path fill="url(#win)" d="M1.500 0H14v14.500H0v-13Q0 0 1.500 0zM15 0h12.500Q29 0 29 1.500v13H15zM0 15.500h14V30H1.500Q0 30 0 28.500zM15 15.500h14v13q0 1.500-1.500 1.500H15z" />
        </svg>
      </button>
      <button className="ml-[18px] flex h-10 w-[275px] items-center rounded-full border border-[#5a5080] bg-[#433a6c] pr-2 pl-3.5 text-[16px] text-[#d5d2e4]">
        <Svg w={19} h={20} sw={1.900}><circle cx="8" cy="8" r="6.800" /><path strokeLinecap="round" d="M13 13.500l5 5" /></Svg>
        <span className="ml-3 flex-1 text-left">Pesquisar</span>
        <Castle />
      </button>
      <div className="ml-0.5 flex items-center">
        <button aria-label="Visão de tarefas" className="flex w-[55px] justify-center">
          <svg width="30" height="30" viewBox="0 0 30 30"><rect x="7.500" y="1" width="22.500" height="20" rx="1.500" fill="#f1f1f4" /><rect y="9" width="23" height="20" rx="1.500" fill="#666" /><path d="M7.500 9H23v12H7.500z" fill="#bcbcbc" /></svg>
        </button>
        <button aria-label="Explorador de Arquivos" className="flex w-[55px] justify-center">
          <svg width="30" height="30" viewBox="0 0 30 30"><path d="M0 3.500Q0 2 1.500 2h8l3.500 3.500V12H0z" fill="#e39b0b" /><path d="M0 9q0-1 1-1h10l2-3h15.500Q30 5 30 6.500V27q0 1.500-1.500 1.500h-27Q0 28.500 0 27z" fill="#ffcb3d" /><path d="M5 28.500V24q0-3 3-3h14q3 0 3 3v4.500z" fill="#0f7fd0" /><path d="M8.500 24.500h13" stroke="#0a4f8c" strokeWidth="1.200" /></svg>
        </button>
        <button aria-label="Microsoft Edge" className="relative flex w-[55px] justify-center">
          <svg width="30" height="30" viewBox="0 0 30 30">
            <defs>
              <linearGradient id="edgeTop" x1="0" y1=".3" x2="1" y2=".6"><stop offset="0" stopColor="#2196dc" /><stop offset=".5" stopColor="#34c1cf" /><stop offset="1" stopColor="#63e04e" /></linearGradient>
            </defs>
            <circle cx="15" cy="15" r="15" fill="#0b62ad" />
            <path d="M0 14C1 5 8 0 15 0c9 0 15 6.500 15 13 0 5-4 7.500-7.500 7.500-3 0-5-1.200-5-2.500 0-1 1.500-1.500 1.500-4C19 10 15.500 8 11.500 8 6 8 1 10 0 14z" fill="url(#edgeTop)" />
            <path d="M0 14c1-4 6-6 11.500-6C8 9.500 7.500 13 7.500 16c0 6 4 12 10.500 13.500C8 32 0 25 0 14z" fill="#1687dd" />
            <path d="M17.500 18c0 1.500 2 2.700 5 2.700 3 0 5.500-1.200 7.500-4l.5 5-3.500 2.500c-3 1.500-8 1-10.500-2-2-3-1-6 1-8.500 1.500-.5 1 2 0 4.300z" fill="#29194e" />
          </svg>
          <i className="absolute -bottom-[9px] h-1 w-2 rounded-full bg-[#a39db8]" />
        </button>
        <button aria-label="MyASUS" className="flex w-[55px] justify-center">
          <svg width="30" height="30" viewBox="0 0 30 30"><path d="M0 0h30v30H0z" fill="#0a6fe8" /><path d="M30 0v14L16 0z" fill="#5aa4fb" opacity=".6" /><path d="M4 21.500L11.500 8H15L7.500 21.500zM11 21.500L20 8h5.500v13.500H22V13l-6 8.500z" fill="#e8f1fd" /></svg>
        </button>
        <button aria-label="Informações" className="flex w-[55px] justify-center">
          <svg width="30" height="30" viewBox="0 0 30 30"><defs><linearGradient id="inf" x1="0" y1="0" x2="0" y2="1"><stop offset="0" stopColor="#0556ad" /><stop offset="1" stopColor="#1d2f63" /></linearGradient></defs><rect width="30" height="30" rx="2" fill="url(#inf)" /><path d="M13 5.500h4v4h-4z" fill="#54c0f5" /><path d="M13 12h4v12.500h-4z" fill="#fff" /></svg>
        </button>
        <button aria-label="Audacity" className="relative ml-0.5 flex size-[50px] items-center justify-center rounded-[5px] border border-[#493459] bg-[#3d2956]">
          <HeadphoneLogo size={30} />
          <i className="absolute bottom-0 h-1 w-5 rounded-full bg-[#4cc2ff]" />
        </button>
      </div>
      <div className="ml-auto flex items-center pr-[26px]">
        <button aria-label="Ícones ocultos"><Svg w={14} h={10} sw={1.700}><path d="M1 8.500l6-7 6 7" /></Svg></button>
        <button className="ml-6 text-center leading-5"><span className="block">POR</span><span className="block">PTB2</span></button>
        <button aria-label="Rede, som e bateria" className="ml-[21px] flex items-center gap-2.5">
          <Svg w={20} h={16} sw={1.700}><path d="M1 6q9-9.500 18 0M3.800 9q6.200-6.500 12.400 0M6.500 12q3.500-3.600 7 0" /><circle cx="10" cy="14" r="1.600" fill="currentColor" stroke="none" /></Svg>
          <Speaker w={20} />
          <Svg w={21} h={14} sw={1.700}><rect x="1" y="1" width="16.500" height="12" rx="2.500" /><path fill="currentColor" stroke="none" d="M3.500 3.500H10v7H3.500z" /><path d="M19.500 5v4" /></Svg>
        </button>
        <button className="ml-5 text-right leading-5"><span className="block">21:13</span><span className="block">30/10/2025</span></button>
      </div>
    </div>
  );
}

export default function App() {
  return (
    <div className="flex h-screen flex-col overflow-hidden bg-[#f7f7f7]">
      <TitleBar />
      <MenuBar />
      <TopToolbars />
      <div className="flex min-h-0 flex-1">
        <EffectsPanel />
        <div className="w-[5px] shrink-0 bg-[#efefef]" />
        <Tracks />
      </div>
      <BottomToolbars />
      <StatusBar />
      <Taskbar />
    </div>
  );
}
